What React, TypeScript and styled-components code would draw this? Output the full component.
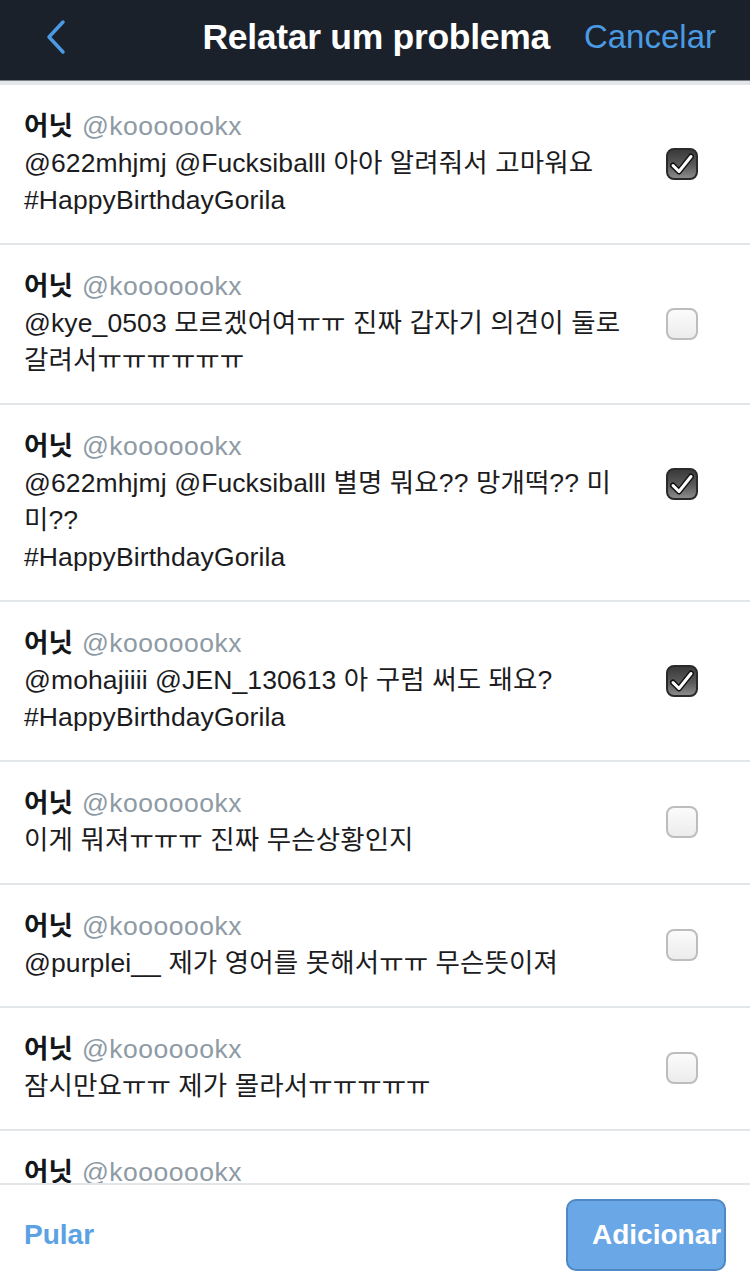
import React from 'react';
import styled, { createGlobalStyle } from 'styled-components';

const GlobalStyle = createGlobalStyle`
  html, body {
    margin: 0;
    padding: 0;
    background: #fff;
  }
  body {
    font-family: "Liberation Sans", "Noto Sans CJK KR", sans-serif;
  }
`;

const Screen = styled.div`
  width: 750px;
  height: 1285px;
  display: flex;
  flex-direction: column;
  overflow: hidden;
  background: #fff;
`;

const Header = styled.header`
  height: 81px;
  flex-shrink: 0;
  box-sizing: border-box;
  background: #1b212a;
  border-bottom: 1px solid #7d828a;
  display: flex;
  align-items: center;
  padding: 0 34px 6px 36px;
`;

const BackButton = styled.button`
  background: none;
  border: 0;
  padding: 0;
  width: 40px;
  height: 40px;
  display: flex;
  align-items: center;
  justify-content: center;
`;

const Title = styled.h1`
  flex: 1;
  margin: 0;
  text-align: right;
  padding-right: 34px;
  color: #fff;
  font-size: 35.5px;
  font-weight: 700;
  letter-spacing: -0.3px;
`;

const CancelLink = styled.span`
  color: #4a9be3;
  font-size: 33px;
`;

const List = styled.div`
  flex: 1;
  overflow: hidden;
  border-top: 4px solid #e4e7ea;
`;

const Row = styled.div`
  display: flex;
  padding: 23px 52px 24px 24px;
  border-bottom: 2px solid #e3e6e9;
`;

const Body = styled.div`
  flex: 1;
  font-size: 26.5px;
  line-height: 37px;
  letter-spacing: 0.1px;
  color: #1c1c1e;
`;

const Line = styled.div`
  white-space: nowrap;
`;

const Name = styled.span`
  font-weight: 700;
  color: #14171a;
`;

const Handle = styled.span`
  color: #8e9aa4;
  margin-left: 9px;
  letter-spacing: 0.5px;
`;

const CheckCell = styled.div`
  align-self: stretch;
  max-height: 111px;
  display: flex;
  align-items: center;
`;

const Box = styled.div<{ $checked: boolean }>`
  width: 32px;
  height: 32px;
  box-sizing: border-box;
  border-radius: 8px;
  display: flex;
  align-items: center;
  justify-content: center;
  border: 2px solid ${(p) => (p.$checked ? '#2a2a2a' : '#bdbdbd')};
  background: ${(p) =>
    p.$checked
      ? 'linear-gradient(180deg, #3a3a3a 0%, #5a5a5a 55%, #8a8a8a 100%)'
      : 'linear-gradient(180deg, #fbfbfb 0%, #ececec 100%)'};
`;

const Footer = styled.footer`
  flex-shrink: 0;
  height: 100px;
  border-top: 2px solid #e3e6e9;
  display: flex;
  align-items: center;
  justify-content: space-between;
  padding: 0 24px;
  background: #fff;
`;

const SkipLink = styled.span`
  color: #5ba2e4;
  font-size: 28px;
  font-weight: 700;
`;

const AddButton = styled.button`
  width: 160px;
  height: 72px;
  border-radius: 10px;
  border: 2px solid #4f88c3;
  background: #69a7e6;
  color: #fff;
  font-family: inherit;
  font-size: 28px;
  font-weight: 700;
  padding: 0 0 0 24px;
  text-align: left;
  white-space: nowrap;
  overflow: hidden;
`;

type Tweet = { lines: string[]; checked?: boolean };

const tweets: Tweet[] = [
  { lines: ['@622mhjmj @Fucksiballl 아아 알려줘서 고마워요', '#HappyBirthdayGorila'], checked: true },
  { lines: ['@kye_0503 모르겠어여ㅠㅠ 진짜 갑자기 의견이 둘로', '갈려서ㅠㅠㅠㅠㅠㅠ'], checked: false },
  { lines: ['@622mhjmj @Fucksiballl 별명 뭐요?? 망개떡?? 미', '미??', '#HappyBirthdayGorila'], checked: true },
  { lines: ['@mohajiiii @JEN_130613 아 구럼 써도 돼요?', '#HappyBirthdayGorila'], checked: true },
  { lines: ['이게 뭐져ㅠㅠㅠ 진짜 무슨상황인지'], checked: false },
  { lines: ['@purplei__ 제가 영어를 못해서ㅠㅠ 무슨뜻이져'], checked: false },
  { lines: ['잠시만요ㅠㅠ 제가 몰라서ㅠㅠㅠㅠㅠ'], checked: false },
  { lines: [] },
];

function CheckBox({ checked }: { checked: boolean }) {
  return (
    <Box $checked={checked}>
      {checked && (
        <svg width="24" height="22" viewBox="0 0 24 22">
          <path
            d="M3 12.5 L9 18.5 L21 3.5"
            fill="none"
            stroke="#111"
            strokeWidth="6"
            strokeLinecap="round"
            strokeLinejoin="round"
          />
          <path
            d="M3 12.5 L9 18.5 L21 3.5"
            fill="none"
            stroke="#fff"
            strokeWidth="3"
            strokeLinecap="round"
            strokeLinejoin="round"
          />
        </svg>
      )}
    </Box>
  );
}

export default function App() {
  return (
    <Screen>
      <GlobalStyle />
      <Header>
        <BackButton aria-label="Voltar">
          <svg width="22" height="36" viewBox="0 0 22 36">
            <path
              d="M18 3 L4 18 L18 33"
              fill="none"
              stroke="#4a9be3"
              strokeWidth="3.5"
              strokeLinecap="round"
              strokeLinejoin="round"
            />
          </svg>
        </BackButton>
        <Title>Relatar um problema</Title>
        <CancelLink>Cancelar</CancelLink>
      </Header>
      <List>
        {tweets.map((t, i) => (
          <Row key={i}>
            <Body>
              <Line>
                <Name>어닛</Name>
                <Handle>@kooooookx</Handle>
              </Line>
              {t.lines.map((l, j) => (
                <Line key={j}>{l}</Line>
              ))}
            </Body>
            {t.checked !== undefined && (
              <CheckCell>
                <CheckBox checked={t.checked} />
              </CheckCell>
            )}
          </Row>
        ))}
      </List>
      <Footer>
        <SkipLink>Pular</SkipLink>
        <AddButton>Adicionar</AddButton>
      </Footer>
    </Screen>
  );
}
